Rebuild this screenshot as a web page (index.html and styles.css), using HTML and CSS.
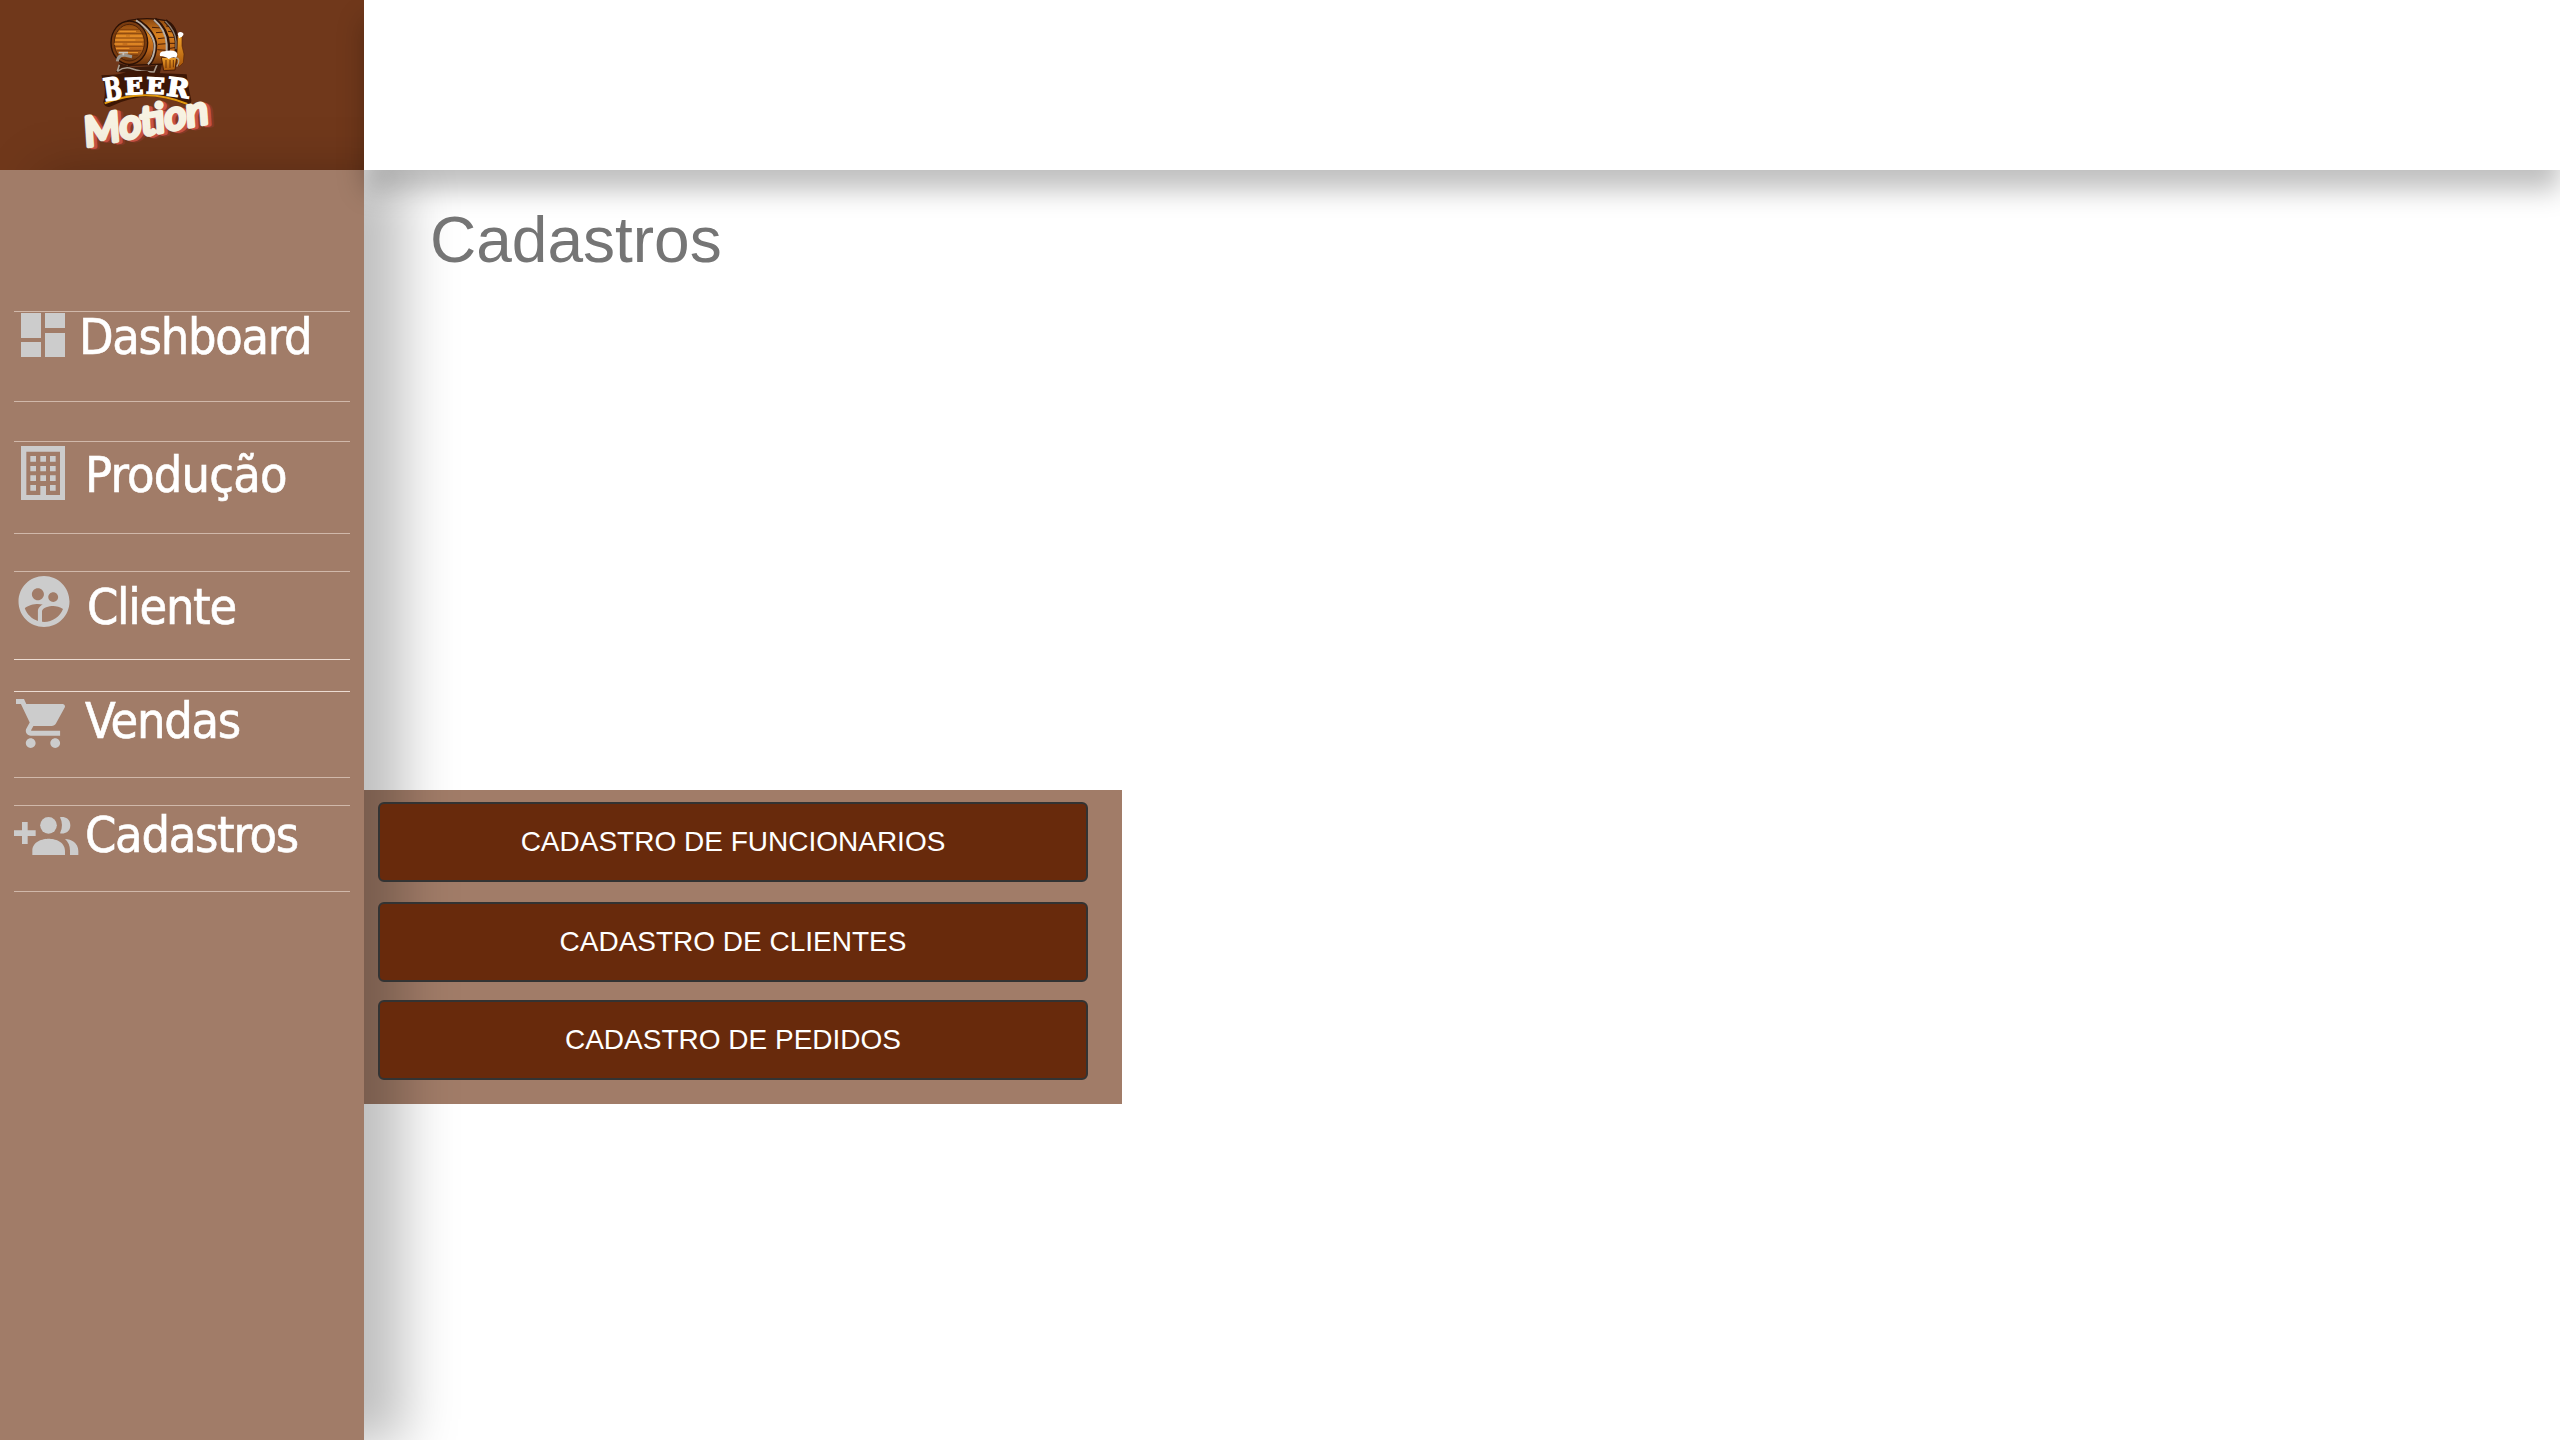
FILE: index.html
```html
<!DOCTYPE html>
<html lang="pt-BR">
<head>
<meta charset="utf-8">
<title>Cadastros</title>
<link rel="stylesheet" href="styles.css">
</head>
<body>
<div class="app">
  <div class="brand">
    <svg class="logo" viewBox="0 0 540 510" role="img" aria-label="Beer Motion">
      <defs>
        <linearGradient id="wood" x1="0" y1="0" x2="0" y2="1">
          <stop offset="0" stop-color="#8a450f"/><stop offset=".35" stop-color="#d9821f"/>
          <stop offset=".65" stop-color="#bd661a"/><stop offset="1" stop-color="#65300c"/>
        </linearGradient>
        <linearGradient id="beer" x1="0" y1="0" x2="0" y2="1">
          <stop offset="0" stop-color="#f0a12a"/><stop offset="1" stop-color="#a8560a"/>
        </linearGradient>
      </defs>
      <!-- barrel stand -->
      <path d="M168 216l10-26 40 12 66-4 16-34 12 4-12 50-8 4z" fill="#3a1a0a"/>
      <path d="M172 214l6-20M172 214q22-16 44-8t66 10l18-44" fill="none" stroke="#a89a8c" stroke-width="5"/>
      <!-- barrel body -->
      <path d="M204 62Q262 50 318 62q34 12 36 68 0 46-28 62l-120 4z" fill="url(#wood)" stroke="#2e1206" stroke-width="4"/>
      <g fill="none" stroke="#4a1f08" stroke-width="3">
        <path d="M258 74q50 52 14 110M276 82l30 2m-18 14l28-2m-22 20l26-3m-26 20l26-2m-28 18l26 2"/>
        <path d="M318 78l22 4m-16 12l24 3m-22 15l26 0m-26 18l26 0m-28 16l26-4"/>
      </g>
      <g fill="none" stroke="#2e1206" stroke-width="12">
        <path d="M230 60q54 36 56 76 0 34-20 58"/><path d="M284 58q38 32 40 74v26"/><path d="M316 62q32 28 34 64v30"/>
      </g>
      <g fill="none" stroke="#b9afa5" stroke-width="6">
        <path d="M228 61q54 36 56 76 0 34-20 56"/><path d="M282 59q36 30 38 74v24"/>
      </g>
      <path d="M316 64q30 28 32 60v24" fill="none" stroke="#8d7f73" stroke-width="4"/>
      <ellipse cx="208" cy="128" rx="55" ry="65" fill="#7a3c10" stroke="#2a1005" stroke-width="4"/>
      <ellipse cx="208" cy="128" rx="45" ry="55" fill="url(#wood)" stroke="#331405" stroke-width="2"/>
      <g fill="none" stroke="#f0982c" stroke-width="3">
        <path d="M178 94h50m-60 14h30m12 0h36m-80 12h60m-64 12h26m14 0h44m-78 13h40m-28 13h54"/>
      </g>
      <g fill="none" stroke="#6b3009" stroke-width="2">
        <path d="M176 88h62m-74 13h86m-88 13h92m-92 12h92m-90 13h88m-82 13h74m-60 14h50"/>
      </g>
      <!-- tap -->
      <path d="M172 184q2-20 24-18l20 4" fill="none" stroke="#9b958e" stroke-width="9"/>
      <path d="M190 166v-10m-14 2h28" fill="none" stroke="#c8c2ba" stroke-width="5"/>
      <!-- bottle and mug -->
      <path d="M353 108h13v30l6 24-2 26-12 12-8-14z" fill="url(#beer)" stroke="#5a2506" stroke-width="2"/>
      <path d="M353 102q2-8 12-5 10 4 2 12l-10 6z" fill="#fff"/>
      <path d="M304 172h46l-5 38-34 2z" fill="url(#beer)" stroke="#4b1d06" stroke-width="3"/>
      <path d="M318 180v24m12-24v24m10-24v22" stroke="#6f3307" stroke-width="3"/>
      <path d="M348 174q16 2 2 26" fill="none" stroke="#b8a287" stroke-width="4"/>
      <path d="M300 168q-4-14 14-14 20-5 34 1 8 8 0 18-10-4-22 4-8-8-26-9z" fill="#fff"/>
      <!-- name plate -->
      <path d="M124 226q70-2 78-13h60q8 10 30 6l88 4q4 34 14 78 0 18-16 14-112-52-228 5-16 4-20-14 12-38-6-80z" fill="#3d1705"/>
      <path d="M134 310q124-50 248 2" fill="none" stroke="#e2990e" stroke-width="6"/>
      <g class="logo-beer">
        <text x="136" y="304" textLength="54" lengthAdjust="spacingAndGlyphs" font-size="94" transform="rotate(-8 136 304)">B</text>
        <text x="195" y="284" textLength="56" lengthAdjust="spacingAndGlyphs" font-size="68" transform="rotate(-3 195 284)">E</text>
        <text x="257" y="280" textLength="56" lengthAdjust="spacingAndGlyphs" font-size="66" transform="rotate(3 257 280)">E</text>
        <text x="317" y="286" textLength="68" lengthAdjust="spacingAndGlyphs" font-size="78" transform="rotate(8 317 286)">R</text>
      </g>
      <g class="logo-motion" transform="translate(80 442) rotate(-11)">
        <text x="16" y="7" fill="#833b29" stroke="#833b29" textLength="378" lengthAdjust="spacingAndGlyphs">Motion</text>
        <text x="9" y="3" fill="#c95345" stroke="#c95345" textLength="378" lengthAdjust="spacingAndGlyphs">Motion</text>
        <text x="0" y="-2" fill="#f7f2e2" stroke="#f7f2e2" textLength="378" lengthAdjust="spacingAndGlyphs">Motion</text>
      </g>
    </svg>
  </div>

  <header class="topbar"></header>

  <nav class="sidebar">
    <a class="item item-dashboard">
      <svg class="icon" viewBox="42 66 216 192"><path d="M63 69h60v75H63zM135 69h60v45h-60zM63 156h60v45H63zM135 129h60v72h-60z"/></svg>
      <span class="label">Dashboard</span>
    </a>
    <a class="item item-producao">
      <svg class="icon" viewBox="42 456 216 192"><path fill-rule="evenodd" d="M63 468h132v162H63zM79 485v130h42v-27h17v27h42V485z"/><path d="M91 498h17v17H91zm30 0h17v17h-17zm29 0h17v17h-17zM91 528h17v16H91zm30 0h17v16h-17zm29 0h17v16h-17zM91 556h17v17H91zm30 0h17v17h-17zm29 0h17v17h-17zM91 585h17v17H91zm59 0h17v17h-17z"/></svg>
      <span class="label">Produção</span>
    </a>
    <a class="item item-cliente">
      <svg class="icon" viewBox="42 66 216 192"><path transform="translate(40.2 62.7) scale(7.65)" d="M12 2C6.48 2 2 6.48 2 12s4.48 10 10 10 10-4.48 10-10S17.52 2 12 2zm3.61 6.34c1.07 0 1.93.86 1.93 1.93 0 1.07-.86 1.93-1.93 1.93-1.07 0-1.93-.86-1.93-1.93-.01-1.07.86-1.93 1.93-1.93zm-6-1.58c1.3 0 2.36 1.06 2.36 2.36 0 1.3-1.06 2.36-2.36 2.36s-2.36-1.06-2.36-2.36c0-1.31 1.05-2.36 2.36-2.36zm0 9.13v3.75c-2.4-.75-4.3-2.6-5.14-4.96 1.05-1.12 3.67-1.69 5.14-1.69.53 0 1.2.08 1.9.22-1.64.87-1.9 2.02-1.9 2.68zM12 20c-.27 0-.53-.01-.79-.04v-4.07c0-1.42 2.94-2.13 4.4-2.13 1.07 0 2.92.39 3.84 1.15C18.28 17.88 15.39 20 12 20z"/></svg>
      <span class="label">Cliente</span>
    </a>
    <a class="item item-vendas">
      <svg class="icon" viewBox="42 426 216 192"><path transform="translate(40.65 432.3) scale(7.35)" d="M7 18c-1.1 0-1.99.9-1.99 2S5.9 22 7 22s2-.9 2-2-.9-2-2-2zM1 2v2h2l3.6 7.59-1.35 2.45c-.16.28-.25.61-.25.96 0 1.1.9 2 2 2h12v-2H7.42c-.14 0-.25-.11-.25-.25l.03-.12.9-1.63h7.45c.75 0 1.41-.41 1.75-1.03l3.58-6.49c.08-.14.12-.31.12-.48 0-.55-.45-1-1-1H5.21l-.94-2H1zm16 16c-1.1 0-1.99.9-1.99 2s.89 2 1.99 2 2-.9 2-2-.9-2-2-2z"/></svg>
      <span class="label">Vendas</span>
    </a>
    <a class="item item-cadastros">
      <svg class="icon" viewBox="42 768 216 192"><path d="M66 816h17v25h24v17H83v24H66v-24H42v-17h24z"/><circle cx="145.500" cy="826" r="25"/><path d="M180 802C190 799 211 803 211 826S190 853 180 850Q192 826 180 802zM97 915v-13C97 874 129 866 146 866S195 874 195 902v13zM195 867C214 867 235 879 235 903v12H210v-13Q210 880 195 867z"/></svg>
      <span class="label">Cadastros</span>
    </a>
  </nav>

  <main class="content">
    <h1 class="title">Cadastros</h1>
    <section class="panel">
      <button class="action">CADASTRO DE FUNCIONARIOS</button>
      <button class="action">CADASTRO DE CLIENTES</button>
      <button class="action">CADASTRO DE PEDIDOS</button>
    </section>
  </main>
</div>
</body>
</html>
```
FILE: styles.css
```css
* { box-sizing: border-box; }

body {
  margin: 0;
  background: #fff;
  font-family: "Liberation Sans", Arial, sans-serif;
}

.app {
  display: grid;
  grid-template-columns: 364px 1fr;
  grid-template-rows: 170px 1fr;
  height: 1440px;
  overflow: hidden;
}

.brand {
  background: #70381b;
  padding-left: 60px;
}

.logo {
  display: block;
  width: 180px;
  height: 170px;
}

.logo-beer {
  font-family: "DejaVu Serif", serif;
  font-weight: 700;
  fill: #fff;
  stroke: #fff;
  stroke-width: 4px;
}

.logo-motion {
  font-family: "Lato", sans-serif;
  font-style: italic;
  font-weight: 400;
  font-size: 122px;
  stroke-width: 12px;
  stroke-linejoin: round;
}

.topbar {
  position: relative;
  z-index: 2;
  background: #fff;
  box-shadow: 0 20px 25px rgba(0, 0, 0, .25);
}

/* The sidebar's shadow falls over the brand block and the panel */
.sidebar {
  position: relative;
  z-index: 1;
  display: flex;
  flex-direction: column;
  padding: 141px 14px 0;
  background: #a17c68;
  box-shadow: 40px 4px 50px rgba(0, 0, 0, .25);
}

.item {
  display: flex;
  align-items: flex-start;
  border: solid #d0b8aa;
  border-width: 1px 0;
  color: #fff;
}

.icon {
  flex: none;
  width: 72px;
  height: 64px;
  fill: #ccc;
}

.label {
  margin-left: -7px;
  font-family: "DejaVu Sans Condensed", "DejaVu Sans", sans-serif;
  font-stretch: condensed;
  font-size: 50px;
  line-height: 58px;
  letter-spacing: -1.3px;
  white-space: nowrap;
  -webkit-text-stroke: .6px #fff;
}

.item-dashboard { height: 91px; margin-bottom: 39px; }
.item-dashboard .label { margin-top: -4px; }

.item-producao { height: 93px; margin-bottom: 37px; }
.item-producao .label { margin: 4px 0 0 -1px; letter-spacing: -.8px; }

.item-cliente { height: 89px; margin-bottom: 31px; border-bottom-color: #ecdcd2; }
.item-cliente .label { margin: 6px 0 0 1px; }

.item-vendas { height: 87px; margin-bottom: 27px; border-top-color: #ecdcd2; }
.item-vendas .label { margin-left: -1px; }

.item-cadastros { height: 87px; }
.item-cadastros .label { margin-left: -1px; }

.content {
  display: flex;
  flex-direction: column;
  align-items: flex-start;
}

.title {
  position: relative;
  z-index: 3;
  height: 72px;
  margin: 34px 0 514px 66px;
  color: #757575;
  font-size: 64px;
  font-weight: 400;
  line-height: 72px;
}

.panel {
  display: flex;
  flex-direction: column;
  width: 758px;
  height: 314px;
  padding: 12px 34px 0 14px;
  background: #a17c68;
}

.action {
  position: relative;
  z-index: 2;
  height: 80px;
  margin-bottom: 20px;
  padding: 0;
  border: 2px solid #333;
  border-radius: 6px;
  background: #682a0c;
  color: #fff;
  font-family: inherit;
  font-size: 28px;
}

.action:nth-child(2) { margin-bottom: 18px; }
```
